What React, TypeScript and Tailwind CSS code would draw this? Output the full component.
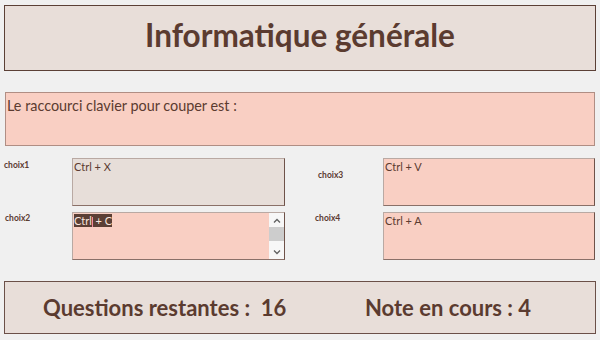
import React from 'react'

const brown = 'text-[#5b3b30]'

function ChoiceBox({ text, tone, selected, scroll }: { text: string; tone: 'grey' | 'pink'; selected?: boolean; scroll?: boolean }) {
  const bg = tone === 'grey' ? 'bg-[#e7ded9]' : 'bg-[#f9cfc3]'
  return (
    <div
      className={`flex h-[48px] border border-[#b9a9a3] border-r-[#6e5249] border-b-[#8a7068] ${bg} text-[11px] ${brown}`}
      style={{ fontFamily: 'Lato, "Open Sans", sans-serif' }}
    >
      <div className="flex-1 pl-[1px] leading-[15px]">
        {selected ? (
          <span className="bg-[#5b3f35] text-[#f9e6df]">
            Ctrl<span className="inline-block w-[1px] h-[10px] bg-[#f08aa0] align-middle" /> + C
          </span>
        ) : (
          text
        )}
      </div>
      {scroll && (
        <div className="flex w-[15px] flex-col bg-[#f7f7f7]">
          <div className="flex h-[14px] items-center justify-center">
            <svg width="8" height="5" viewBox="0 0 8 5"><path d="M1 4.5 L4 1.5 L7 4.5" fill="none" stroke="#606060" strokeWidth="1.3" /></svg>
          </div>
          <div className="h-[14px] bg-[#cdcdcd]" />
          <div className="flex-1" />
          <div className="flex h-[14px] items-center justify-center">
            <svg width="8" height="5" viewBox="0 0 8 5"><path d="M1 0.5 L4 3.5 L7 0.5" fill="none" stroke="#606060" strokeWidth="1.3" /></svg>
          </div>
        </div>
      )}
    </div>
  )
}

function Label({ children, className }: { children: string; className: string }) {
  return (
    <div className={`text-[8.5px] font-bold ${brown} ${className}`} style={{ fontFamily: 'Lato, sans-serif' }}>
      {children}
    </div>
  )
}

export default function App() {
  return (
    <div className="flex h-[340px] w-[600px] flex-col bg-[#f0f0f0]" style={{ fontFamily: 'Lato, "Open Sans", sans-serif' }}>
      <div className="mx-[4px] mt-[5px] flex h-[66px] items-center justify-center border border-[#5b4036] bg-[#e8ded9]">
        <h1 className={`pb-[5px] text-[31.5px] font-bold ${brown}`}>Informatique générale</h1>
      </div>

      <div className={`mx-[5px] mt-[21px] h-[54px] border border-[#b08e84] bg-[#f9cfc3] pl-[1px] pt-[2px] text-[14.4px] ${brown}`}>
        Le raccourci clavier pour couper est :
      </div>

      <div className="mt-[12px] ml-[4px] grid grid-cols-[68px_213px_98px_212px] grid-rows-[48px_48px] gap-y-[6px]">
        <Label className="pt-[1px]">choix1</Label>
        <ChoiceBox text="Ctrl + X" tone="grey" />
        <Label className="pl-[33px] pt-[11px]">choix3</Label>
        <ChoiceBox text="Ctrl + V" tone="pink" />

        <Label className="pl-[1px] pt-[0px]">choix2</Label>
        <ChoiceBox text="Ctrl + C" tone="pink" selected scroll />
        <Label className="pl-[30px]">choix4</Label>
        <ChoiceBox text="Ctrl + A" tone="pink" />
      </div>

      <div className="mx-[4px] mt-[21px] flex h-[53px] items-center border border-[#6b5048] bg-[#e8ded9] pl-[38px] text-[22px] font-bold">
        <span className={`${brown} w-[322px] whitespace-pre`}>Questions restantes :  16</span>
        <span className={brown}>Note en cours : 4</span>
      </div>
    </div>
  )
}
